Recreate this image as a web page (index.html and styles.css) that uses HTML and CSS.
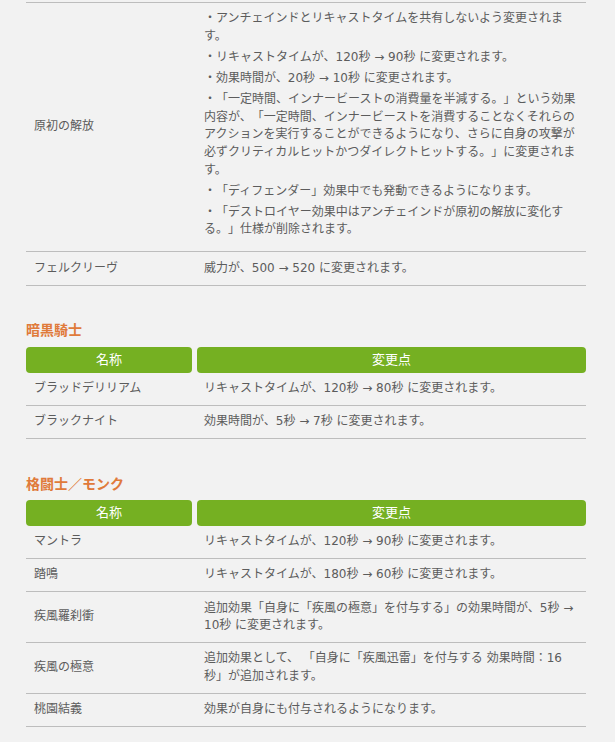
FILE: index.html
```html
<!DOCTYPE html>
<html lang="ja">
<head>
<meta charset="utf-8">
<link rel="stylesheet" href="styles.css">
</head>
<body>
<div class="page">
  <div class="tbl tbl-first">
    <div class="row">
      <div class="name">原初の解放</div>
      <div class="desc list">
        <p>・アンチェインドとリキャストタイムを共有しないよう変更されます。</p>
        <p>・リキャストタイムが、120秒 → 90秒 に変更されます。</p>
        <p>・効果時間が、20秒 → 10秒 に変更されます。</p>
        <p>・「一定時間、インナービーストの消費量を半減する。」という効果内容が、「一定時間、インナービーストを消費することなくそれらのアクションを実行することができるようになり、さらに自身の攻撃が必ずクリティカルヒットかつダイレクトヒットする。」に変更されます。</p>
        <p>・「ディフェンダー」効果中でも発動できるようになります。</p>
        <p>・「デストロイヤー効果中はアンチェインドが原初の解放に変化する。」仕様が削除されます。</p>
      </div>
    </div>
    <div class="row">
      <div class="name">フェルクリーヴ</div>
      <div class="desc">威力が、500 → 520 に変更されます。</div>
    </div>
  </div>

  <h3 class="job">暗黒騎士</h3>
  <div class="tbl">
    <div class="head">
      <div class="th">名称</div>
      <div class="th">変更点</div>
    </div>
    <div class="row">
      <div class="name">ブラッドデリリアム</div>
      <div class="desc">リキャストタイムが、120秒 → 80秒 に変更されます。</div>
    </div>
    <div class="row">
      <div class="name">ブラックナイト</div>
      <div class="desc">効果時間が、5秒 → 7秒 に変更されます。</div>
    </div>
  </div>

  <h3 class="job job-second">格闘士／モンク</h3>
  <div class="tbl">
    <div class="head">
      <div class="th">名称</div>
      <div class="th">変更点</div>
    </div>
    <div class="row">
      <div class="name">マントラ</div>
      <div class="desc">リキャストタイムが、120秒 → 90秒 に変更されます。</div>
    </div>
    <div class="row">
      <div class="name">踏鳴</div>
      <div class="desc">リキャストタイムが、180秒 → 60秒 に変更されます。</div>
    </div>
    <div class="row">
      <div class="name">疾風羅刹衝</div>
      <div class="desc">追加効果「自身に「疾風の極意」を付与する」の効果時間が、5秒 → 10秒 に変更されます。</div>
    </div>
    <div class="row">
      <div class="name">疾風の極意</div>
      <div class="desc">追加効果として、 「自身に「疾風迅雷」を付与する 効果時間：16秒」が追加されます。</div>
    </div>
    <div class="row">
      <div class="name">桃園結義</div>
      <div class="desc">効果が自身にも付与されるようになります。</div>
    </div>
  </div>
</div>
</body>
</html>
```

FILE: styles.css
```css
html, body {
  margin: 0;
  padding: 0;
  background: #f2f2f2;
}
body {
  font-family: "DejaVu Sans", "Noto Sans CJK JP", sans-serif;
  font-size: 12px;
  color: #5c5c5c;
  text-spacing-trim: space-all;
}
.page {
  padding: 2px 0 0 26px;
  width: 560px;
}
.tbl {
  width: 560px;
}
.tbl-first {
  border-top: 1px solid #bdbdbd;
}
.head {
  display: grid;
  grid-template-columns: 166px 389px;
  column-gap: 5px;
}
.th {
  background: #75b022;
  color: #ffffff;
  border-radius: 4px;
  height: 26px;
  line-height: 26px;
  text-align: center;
  font-size: 13px;
}
.row {
  display: grid;
  grid-template-columns: 171px 389px;
  align-items: center;
  border-bottom: 1px solid #bdbdbd;
}
.name {
  padding: 7.3px 8px;
  line-height: 17.6px;
}
.desc {
  padding: 7.3px 8px 7.3px 7px;
  line-height: 17.6px;
}
.desc.list {
  padding-bottom: 9px;
}
.desc.list p {
  margin: 0 0 3.5px;
}
.job {
  margin: 33px 0 8px;
  font-size: 14px;
  line-height: 20px;
  font-weight: bold;
  color: #e07a3a;
  font-family: "Noto Sans CJK JP", sans-serif;
}
.job-second {
  margin-top: 34px;
  margin-bottom: 7px;
}
```
